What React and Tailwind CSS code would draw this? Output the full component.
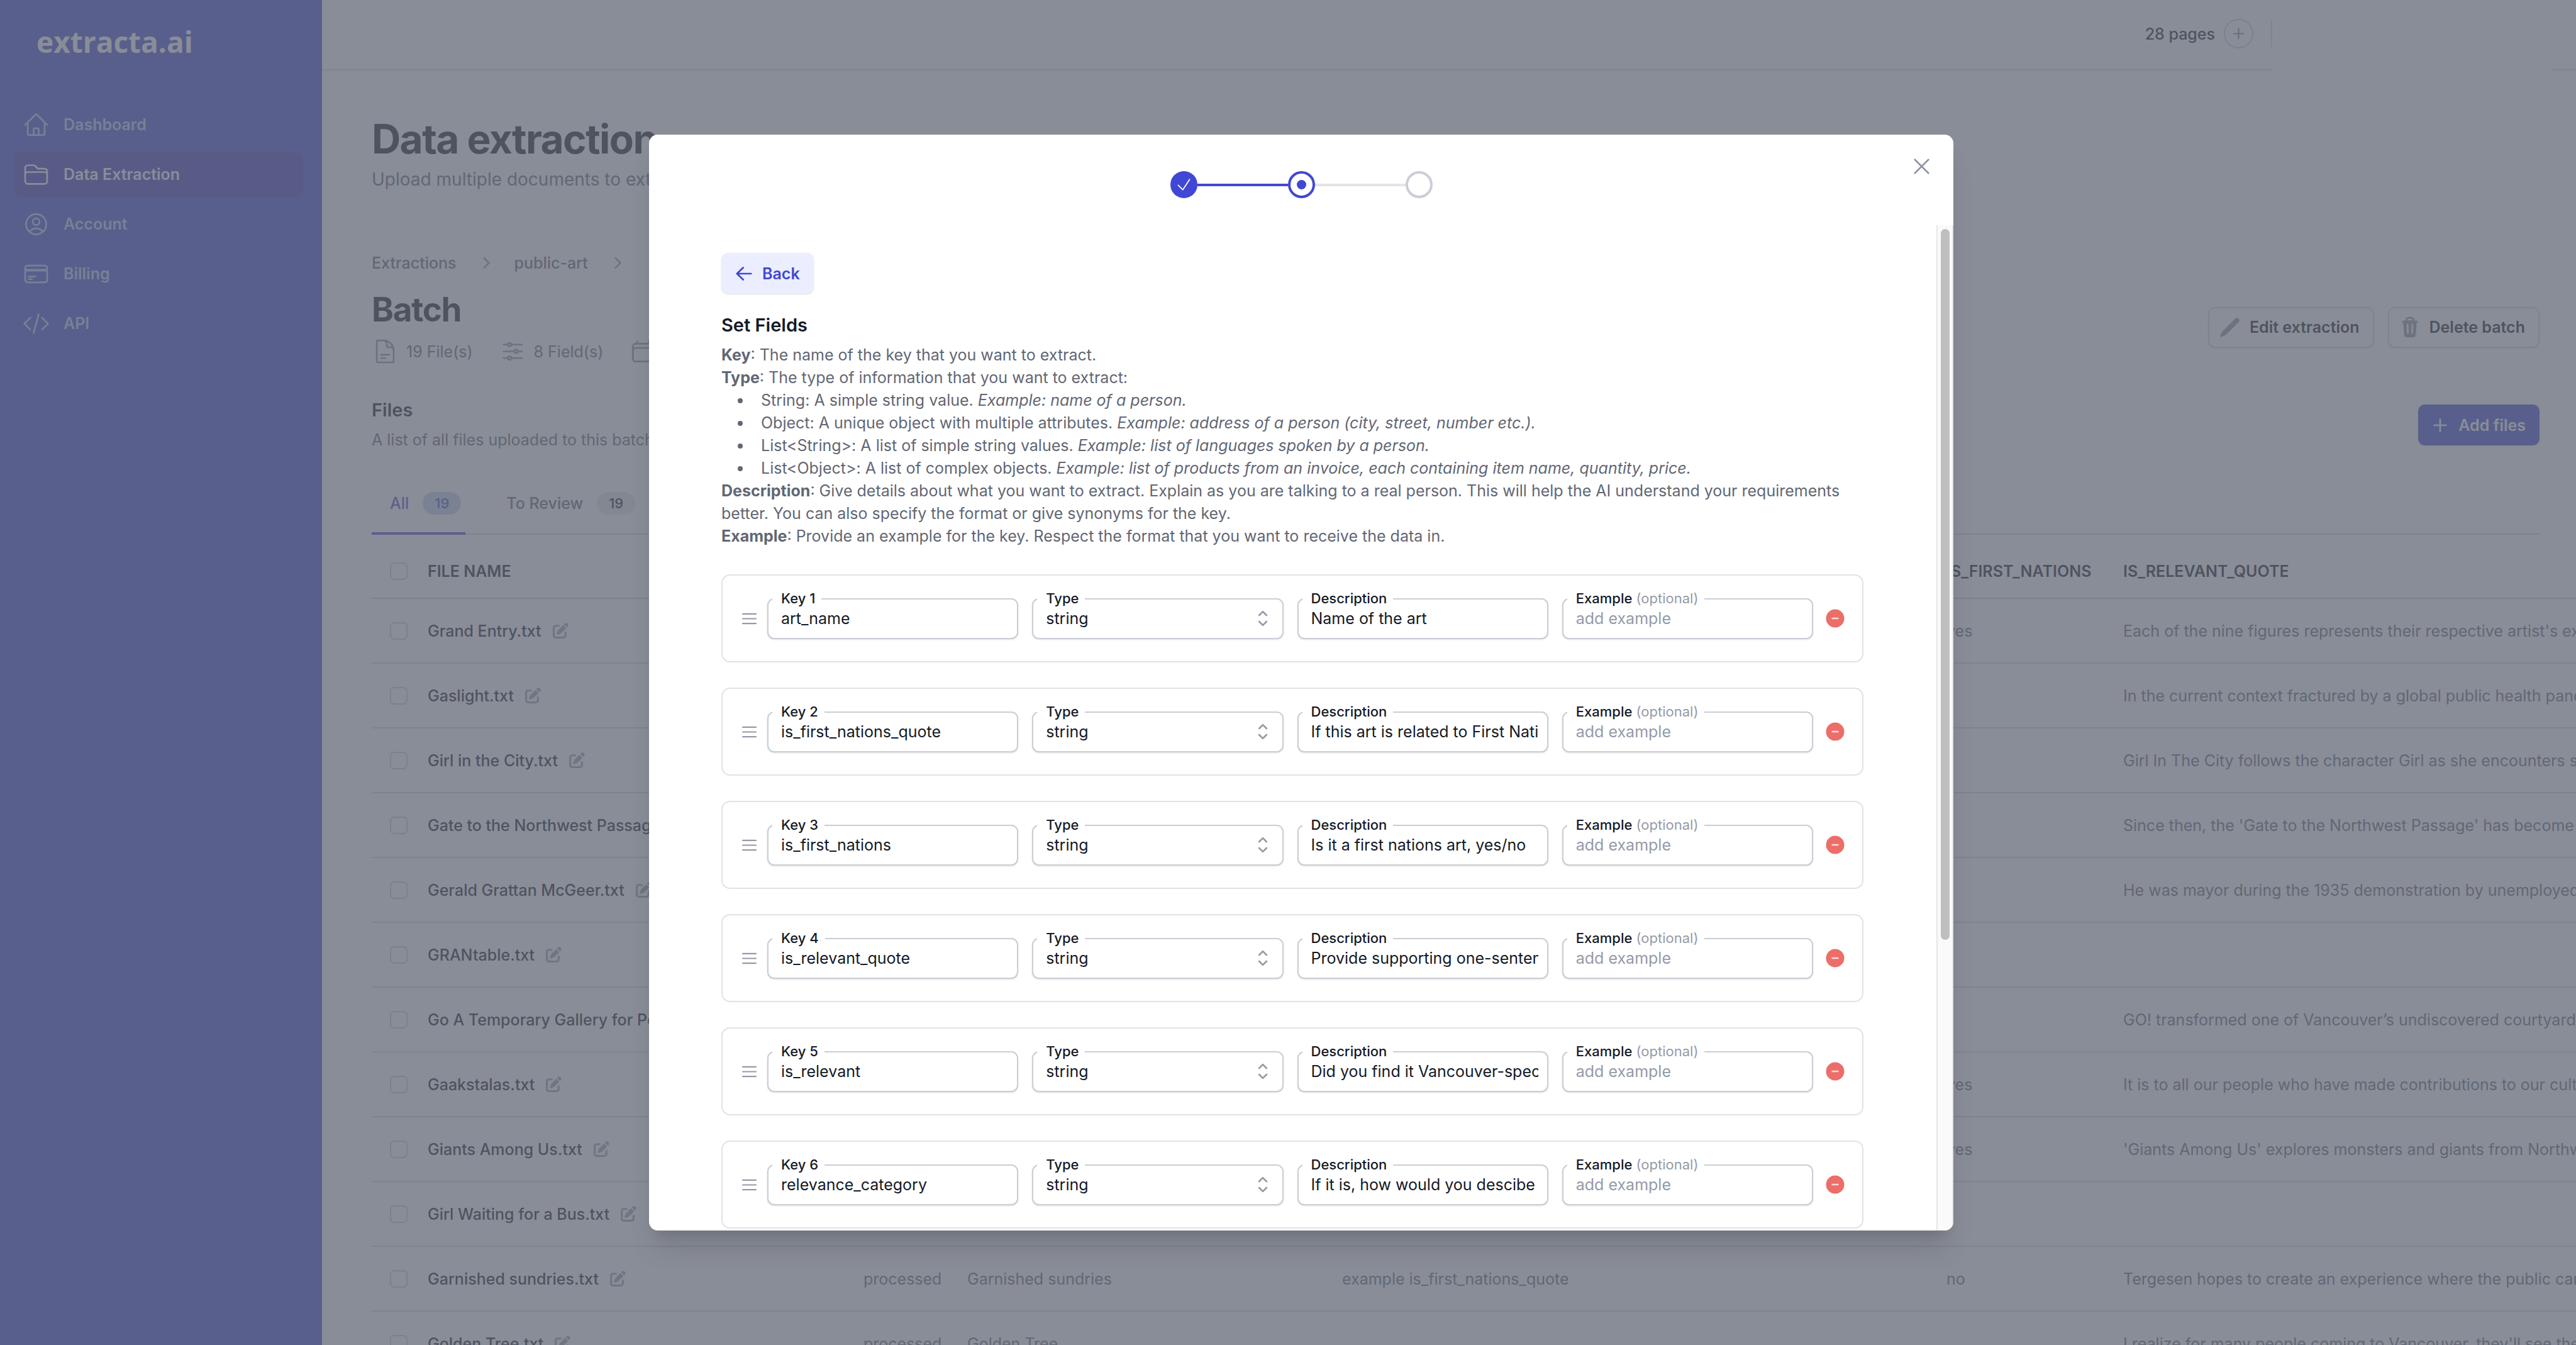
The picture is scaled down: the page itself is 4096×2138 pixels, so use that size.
import React from "react";
import {
  HiOutlineHome,
  HiOutlineFolder,
  HiOutlineUserCircle,
  HiOutlineCreditCard,
  HiOutlineCodeBracket,
  HiOutlineDocumentText,
  HiOutlineAdjustmentsHorizontal,
  HiOutlineCalendar,
  HiOutlineXMark,
  HiOutlineCheck,
  HiMiniChevronRight,
  HiMiniPencil,
  HiMiniTrash,
  HiMiniPlus,
  HiMiniArrowLeft,
  HiMiniBars3,
  HiMiniChevronUpDown,
} from "react-icons/hi2";
import { FaPenToSquare } from "react-icons/fa6";

const navItems = [
  { label: "Dashboard", Icon: HiOutlineHome },
  { label: "Data Extraction", Icon: HiOutlineFolder, active: true },
  { label: "Account", Icon: HiOutlineUserCircle },
  { label: "Billing", Icon: HiOutlineCreditCard },
  { label: "API", Icon: HiOutlineCodeBracket },
];

const files = [
  { name: "Grand Entry.txt", nations: "yes", quote: "Each of the nine figures represents their respective artist's experience" },
  { name: "Gaslight.txt", quote: "In the current context fractured by a global public health pandemic" },
  { name: "Girl in the City.txt", quote: "Girl In The City follows the character Girl as she encounters some" },
  { name: "Gate to the Northwest Passage.txt", quote: "Since then, the 'Gate to the Northwest Passage' has become a landmark" },
  { name: "Gerald Grattan McGeer.txt", quote: "He was mayor during the 1935 demonstration by unemployed workers" },
  { name: "GRANtable.txt" },
  { name: "Go A Temporary Gallery for People.txt", quote: "GO! transformed one of Vancouver’s undiscovered courtyards into" },
  { name: "Gaakstalas.txt", nations: "yes", quote: "It is to all our people who have made contributions to our culture" },
  { name: "Giants Among Us.txt", nations: "yes", quote: "'Giants Among Us' explores monsters and giants from Northwest" },
  { name: "Girl Waiting for a Bus.txt" },
  {
    name: "Garnished sundries.txt",
    status: "processed",
    title: "Garnished sundries",
    nationsQuote: "example is_first_nations_quote",
    nations: "no",
    quote: "Tergesen hopes to create an experience where the public can engage",
  },
  {
    name: "Golden Tree.txt",
    status: "processed",
    title: "Golden Tree",
    quote: "I realize for many people coming to Vancouver, they'll see the tree",
  },
];

const fields = [
  { key: "art_name", description: "Name of the art" },
  { key: "is_first_nations_quote", description: "If this art is related to First Nations" },
  { key: "is_first_nations", description: "Is it a first nations art, yes/no" },
  { key: "is_relevant_quote", description: "Provide supporting one-sentence quote" },
  { key: "is_relevant", description: "Did you find it Vancouver-specific" },
  { key: "relevance_category", description: "If it is, how would you descibe it" },
];

function Sidebar() {
  return (
    <aside className="w-[512px] shrink-0 bg-[#3f47d3] px-[22px]">
      <div className="flex h-[162px] pt-[34px] pl-[36px] font-['Open_Sans',sans-serif] text-[46px] leading-[64px] font-bold text-white">
        extracta.ai
      </div>
      <nav className="mr-2 flex flex-col gap-[7px]">
        {navItems.map(({ label, Icon, active }) => (
          <a
            key={label}
            href="#"
            className={
              active
                ? "flex h-[72px] items-center gap-[22px] rounded-[11px] bg-[#3a38bd] px-[14px] font-semibold text-white"
                : "flex h-[72px] items-center gap-[22px] rounded-[11px] px-[14px] font-semibold text-[#bccbf5]"
            }
          >
            <Icon className="size-[43px]" />
            {label}
          </a>
        ))}
      </nav>
    </aside>
  );
}

function TopBar() {
  return (
    <header className="flex h-[112px]">
      <div className="flex flex-1 items-start justify-end border-b-2 border-[#d1d5db] pt-[30px]">
        <div className="flex h-[47px] items-center gap-[14px] font-medium text-[#111827]">
          28 pages
          <button
            type="button"
            aria-label="Add pages"
            className="flex size-[47px] items-center justify-center rounded-full border-2 border-[#c6cad2] text-[#7b8190]"
          >
            <HiMiniPlus className="size-[29px]" />
          </button>
          <span className="ml-[14px] h-[43px] w-[2px] bg-[#d1d5db]" />
        </div>
      </div>
      <div className="w-[443px]" />
      <div className="w-10 border-b-2 border-[#d1d5db]" />
    </header>
  );
}

const outlineButton =
  "flex h-[65px] items-center gap-[13px] rounded-[11px] border-2 border-[#d1d5db] bg-white pr-[21px] pl-[15px] font-semibold text-[#111827] shadow-sm";

function BatchHeader() {
  return (
    <section>
      <nav aria-label="Breadcrumb" className="mt-[95px] flex items-center font-medium text-[#626774]">
        <a href="#">Extractions</a>
        <HiMiniChevronRight className="mx-[28px] size-[36px] text-[#8d93a1]" />
        <a href="#">public-art</a>
        <HiMiniChevronRight className="mx-[28px] size-[36px] text-[#8d93a1]" />
      </nav>
      <div className="mt-6 flex items-center justify-between">
        <div>
          <h2 className="text-[53px] leading-[64px] font-bold tracking-tight text-[#111827]">Batch</h2>
          <div className="mt-[13px] flex h-[43px] items-center gap-[42px] text-[#626774]">
            <span className="flex items-center gap-[12px]">
              <HiOutlineDocumentText className="size-[43px] text-[#8d93a1]" />
              19 File(s)
            </span>
            <span className="flex items-center gap-[12px]">
              <HiOutlineAdjustmentsHorizontal className="size-[43px] text-[#8d93a1]" />
              8 Field(s)
            </span>
            <HiOutlineCalendar className="size-[43px] text-[#8d93a1]" />
          </div>
        </div>
        <div className="flex gap-[22px]">
          <button type="button" className={outlineButton}>
            <HiMiniPencil className="size-[36px] text-[#8d93a1]" />
            Edit extraction
          </button>
          <button type="button" className={outlineButton}>
            <HiMiniTrash className="size-[36px] text-[#8d93a1]" />
            Delete batch
          </button>
        </div>
      </div>
    </section>
  );
}

function Tabs() {
  return (
    <div className="mt-[37px] flex gap-[36px] border-b-2 border-[#d1d5db]">
      <button
        type="button"
        className="-mb-[2px] flex items-center gap-[22px] border-b-4 border-[#4147d5] py-[28px] pr-[7px] pl-[29px] font-medium text-[#4147d5]"
      >
        All
        <span className="h-[36px] w-[61px] rounded-full bg-[#c3d0ee] text-center text-[22px] leading-[36px]">19</span>
      </button>
      <button
        type="button"
        className="-mb-[2px] flex items-center gap-[22px] border-b-4 border-transparent py-[28px] pr-[7px] pl-[29px] font-medium text-[#626774]"
      >
        To Review
        <span className="h-[36px] w-[61px] rounded-full bg-[#e4e8ea] text-center text-[22px] leading-[36px] text-[#111827]">19</span>
      </button>
    </div>
  );
}

const tick = "block size-[28px] appearance-none rounded-[7px] border-2 border-[#c6cad2] bg-white";

function FilesTable() {
  return (
    <table className="w-[4000px] table-fixed border-separate border-spacing-0 text-left whitespace-nowrap text-[#626774]">
      <colgroup>
        <col className="w-[89px]" />
        <col className="w-[693px]" />
        <col className="w-[165px]" />
        <col className="w-[596px]" />
        <col className="w-[961px]" />
        <col className="w-[281px]" />
        <col />
      </colgroup>
      <thead>
        <tr className="text-[#111827] [&>th]:h-[102px] [&>th]:border-b-2 [&>th]:border-[#c6cad2] [&>th]:pt-[16px] [&>th]:font-semibold">
          <th className="pl-[29px]">
            <input type="checkbox" aria-label="Select all files" className={tick} />
          </th>
          <th>FILE NAME</th>
          <th />
          <th />
          <th />
          <th>IS_FIRST_NATIONS</th>
          <th>IS_RELEVANT_QUOTE</th>
        </tr>
      </thead>
      <tbody>
        {files.map((file) => (
          <tr key={file.name} className="[&>td]:h-[103px] [&>td]:border-b-2 [&>td]:border-[#d1d5db]">
            <td className="pl-[29px]">
              <input type="checkbox" aria-label={file.name} className={tick} />
            </td>
            <td>
              <div className="flex items-center gap-[18px] font-medium text-[#111827]">
                {file.name}
                <FaPenToSquare className="size-[25px] text-[#9ca0ad]" />
              </div>
            </td>
            <td>{file.status}</td>
            <td>{file.title}</td>
            <td>{file.nationsQuote}</td>
            <td>{file.nations}</td>
            <td>{file.quote}</td>
          </tr>
        ))}
      </tbody>
    </table>
  );
}

function Stepper() {
  return (
    <ol className="flex items-center justify-center pt-[58px]">
      <li className="flex size-[43px] items-center justify-center rounded-full bg-[#4147d5] text-white">
        <HiOutlineCheck className="size-[29px]" />
      </li>
      <li className="h-[4px] w-[144px] bg-[#4147d5]" aria-hidden="true" />
      <li className="flex size-[43px] items-center justify-center rounded-full border-4 border-[#4147d5]">
        <span className="size-[15px] rounded-full bg-[#4147d5]" />
      </li>
      <li className="h-[4px] w-[144px] bg-[#e2e4e9]" aria-hidden="true" />
      <li className="size-[43px] rounded-full border-4 border-[#caced6]" />
    </ol>
  );
}

function RemoveIcon() {
  return (
    <svg viewBox="0 0 36 36" className="size-[36px]" aria-hidden="true">
      <circle cx="18" cy="18" r="14.5" fill="#ec6e68" />
      <rect x="12.5" y="16.7" width="11" height="2.6" rx="0.4" fill="#f9dad8" />
    </svg>
  );
}

const box =
  "h-[65px] w-full appearance-none rounded-[11px] border-2 border-[#caced6] bg-white pr-[14px] pl-[20px] text-[#151a26] shadow-sm placeholder:text-[#959aa8]";
const caption =
  "absolute -top-[13px] left-[8px] bg-white pr-[10px] pl-[14px] text-[22px] leading-[26px] font-medium text-[#151a26]";

function Field({ id, label, optional, children }) {
  return (
    <div className="relative min-w-0 flex-1">
      {children}
      <label htmlFor={id} className={caption}>
        {label}
        {optional && <span className="font-normal text-[#959aa8]"> (optional)</span>}
      </label>
    </div>
  );
}

function FieldCard({ field, index }) {
  const id = `field-${index}`;
  return (
    <div className="flex h-[140px] items-center rounded-[14px] border-2 border-[#e1e2e8] pr-[25px] pl-[28px]">
      <HiMiniBars3 className="mr-[14px] size-[29px] shrink-0 text-[#959aa8]" />
      <div className="flex min-w-0 flex-1 gap-[22px]">
        <Field id={`${id}-key`} label={`Key ${index}`}>
          <input id={`${id}-key`} type="text" defaultValue={field.key} className={box} />
        </Field>
        <Field id={`${id}-type`} label="Type">
          <select id={`${id}-type`} defaultValue="string" className={box}>
            <option value="string">string</option>
          </select>
          <HiMiniChevronUpDown className="pointer-events-none absolute top-[14px] right-[15px] size-[36px] text-[#959aa8]" />
        </Field>
        <Field id={`${id}-description`} label="Description">
          <input id={`${id}-description`} type="text" defaultValue={field.description} className={box} />
        </Field>
        <Field id={`${id}-example`} label="Example" optional>
          <input id={`${id}-example`} type="text" placeholder="add example" className={box} />
        </Field>
      </div>
      <button type="button" aria-label={`Remove key ${index}`} className="ml-[17px]">
        <RemoveIcon />
      </button>
    </div>
  );
}

function Instructions() {
  return (
    <div className="text-[#626774]">
      <p>
        <b>Key</b>: The name of the key that you want to extract.
      </p>
      <p>
        <b>Type</b>: The type of information that you want to extract:
      </p>
      <ul className="list-disc pl-[49px] [&>li]:pl-[14px]">
        <li>
          String: A simple string value. <i>Example: name of a person.</i>
        </li>
        <li>
          Object: A unique object with multiple attributes. <i>Example: address of a person (city, street, number etc.).</i>
        </li>
        <li>
          List&lt;String&gt;: A list of simple string values. <i>Example: list of languages spoken by a person.</i>
        </li>
        <li>
          List&lt;Object&gt;: A list of complex objects.{" "}
          <i>Example: list of products from an invoice, each containing item name, quantity, price.</i>
        </li>
      </ul>
      <p>
        <b>Description</b>: Give details about what you want to extract. Explain as you are talking to a real person. This
        will help the AI understand your requirements better. You can also specify the format or give synonyms for the key.
      </p>
      <p>
        <b>Example</b>: Provide an example for the key. Respect the format that you want to receive the data in.
      </p>
    </div>
  );
}

function FieldsDialog() {
  return (
    <div
      role="dialog"
      aria-modal="true"
      aria-labelledby="dialog-title"
      className="relative flex w-[2074px] flex-col overflow-hidden rounded-[14px] bg-white shadow-[0_36px_45px_-9px_rgb(0_0_0/0.12),0_14px_18px_-11px_rgb(0_0_0/0.12)]"
    >
      <button type="button" aria-label="Close" className="absolute top-[29px] right-[29px] text-[#8f95a3]">
        <HiOutlineXMark className="size-[43px]" />
      </button>
      <Stepper />
      <div className="mt-[43px] flex min-h-0 flex-1">
        <div className="min-w-0 flex-1 overflow-hidden pt-[44px] pr-[116px] pl-[115px]">
          <button
            type="button"
            className="flex h-[65px] items-center gap-[11px] rounded-[11px] bg-[#ebeefe] pr-[22px] pl-[18px] font-semibold text-[#4147d5] shadow-sm"
          >
            <HiMiniArrowLeft className="size-[36px]" />
            Back
          </button>
          <h3 id="dialog-title" className="mt-[32px] mb-[11px] text-[29px] leading-[36px] font-semibold text-[#151a26]">
            Set Fields
          </h3>
          <Instructions />
          <div className="mt-[43px] flex flex-col gap-[40px]">
            {fields.map((field, i) => (
              <FieldCard key={field.key} field={field} index={i + 1} />
            ))}
          </div>
        </div>
        <div className="w-[27px] border-r-2 border-l-2 border-[#e6e6e6] bg-[#fafafa] px-[5px] pt-[6px]">
          <div className="h-[71%] w-[14px] rounded-full bg-[#bfbfbf]" />
        </div>
      </div>
    </div>
  );
}

export default function App() {
  return (
    <div className="relative h-screen overflow-hidden bg-white font-['Inter',sans-serif] text-[25px] leading-[36px]">
      <div className="flex h-full">
        <Sidebar />
        <div className="min-w-0 flex-1 overflow-hidden">
          <TopBar />
          <main className="pt-[73px] pr-[58px] pl-[79px]">
            <h1 className="text-[64px] leading-[72px] font-bold tracking-tight text-[#111827]">Data extraction</h1>
            <p className="mt-2 text-[28px] leading-[40px] text-[#626774]">Upload multiple documents to extract data</p>
            <BatchHeader />
            <section>
              <div className="mt-[54px] flex items-center justify-between">
                <div>
                  <h3 className="text-[29px] leading-[36px] font-semibold text-[#111827]">Files</h3>
                  <p className="mt-[11px] text-[#626774]">A list of all files uploaded to this batch.</p>
                </div>
                <button
                  type="button"
                  className="flex h-[65px] items-center gap-[11px] rounded-[11px] bg-[#3f47d3] pr-[22px] pl-[17px] font-semibold text-white shadow-sm"
                >
                  <HiMiniPlus className="size-[36px]" />
                  Add files
                </button>
              </div>
              <Tabs />
              <FilesTable />
            </section>
          </main>
        </div>
      </div>
      <div className="absolute inset-0 flex justify-center bg-[#626774]/75 pt-[214px] pb-[182px] pl-[42px]">
        <FieldsDialog />
      </div>
    </div>
  );
}
